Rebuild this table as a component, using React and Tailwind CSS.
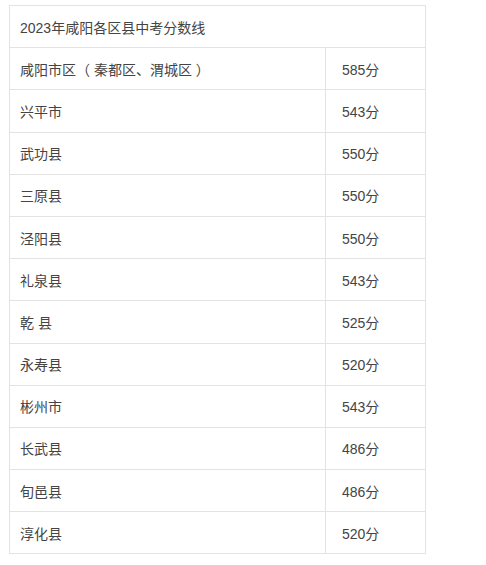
const rows = [
  ["咸阳市区（ 秦都区、渭城区 ）", "585分"],
  ["兴平市", "543分"],
  ["武功县", "550分"],
  ["三原县", "550分"],
  ["泾阳县", "550分"],
  ["礼泉县", "543分"],
  ["乾 县", "525分"],
  ["永寿县", "520分"],
  ["彬州市", "543分"],
  ["长武县", "486分"],
  ["旬邑县", "486分"],
  ["淳化县", "520分"],
];

export default function App() {
  return (
    <div
      className="min-h-screen bg-white pl-[9px] pt-[5px] text-[14px] text-[#444444]"
      style={{ fontFamily: '"Liberation Sans", "Noto Sans CJK SC", sans-serif' }}
    >
      <div className="w-[417px] border border-[#e3e3e3]">
        <div className="flex h-[42.2px] items-center border-b border-[#e3e3e3] pl-[10px] pt-[3px]">
          2023年咸阳各区县中考分数线
        </div>
        {rows.map(([name, score], i) => (
          <div
            key={i}
            className={
              i === rows.length - 1
                ? "flex h-[41.2px]"
                : "flex h-[42.2px] border-b border-[#e3e3e3]"
            }
          >
            <div className="flex w-[316px] items-center whitespace-pre border-r border-[#e3e3e3] pl-[10px] pt-[3px]">
              {name}
            </div>
            <div className="flex flex-1 items-center pl-[16px] pt-[3px]">{score}</div>
          </div>
        ))}
      </div>
    </div>
  );
}
